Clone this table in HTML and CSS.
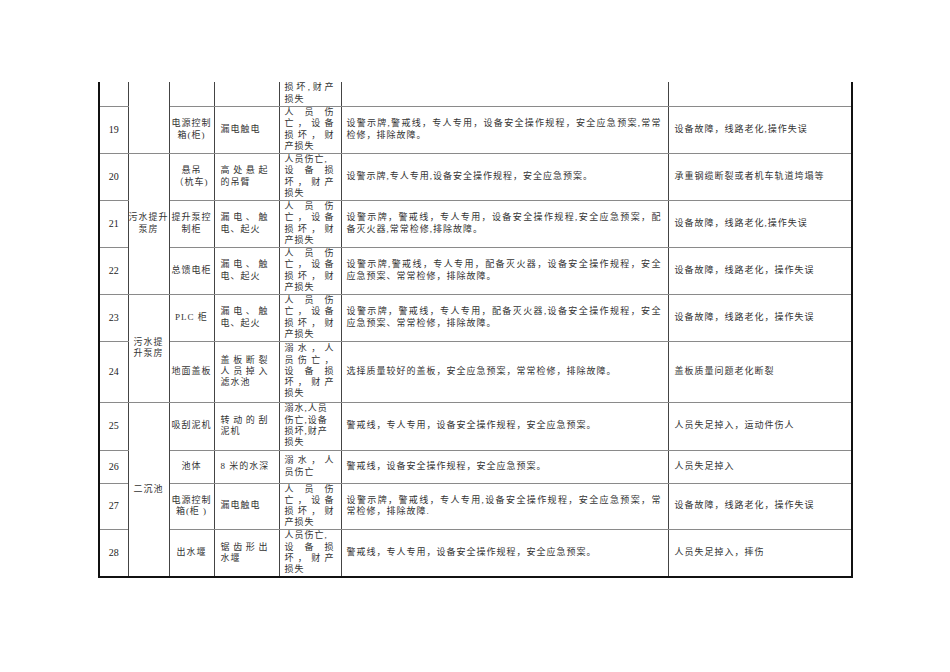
FILE: index.html
```html
<!DOCTYPE html>
<html lang="zh-CN">
<head>
<meta charset="utf-8">
<title>危险源辨识表</title>
<link rel="stylesheet" href="styles.css">
</head>
<body>
<div class="page">
<table class="sheet">
<colgroup>
<col class="c-num"><col class="c-grp"><col class="c-eq"><col class="c-hz"><col class="c-cq"><col class="c-ms"><col class="c-cs">
</colgroup>
<tbody>
<tr class="r24">
<td class="num"></td>
<td class="grp" rowspan="2"></td>
<td class="eq"></td>
<td class="hz"></td>
<td class="cq"><span class="l j">损坏,财产</span><span class="l">损失</span></td>
<td class="ms"></td>
<td class="cs"></td>
</tr>
<tr class="r47">
<td class="num">19</td>
<td class="eq"><span class="l">电源控制</span><span class="l">箱(柜)</span></td>
<td class="hz">漏电触电</td>
<td class="cq"><span class="l j">人员伤</span><span class="l j">亡，设备</span><span class="l j">损坏，财</span><span class="l">产损失</span></td>
<td class="ms"><span class="l j">设警示牌,警戒线，专人专用，设备安全操作规程，安全应急预案,常常</span><span class="l">检修，排除故障。</span></td>
<td class="cs">设备故障，线路老化,操作失误</td>
</tr>
<tr class="r47">
<td class="num">20</td>
<td class="grp" rowspan="3"><span class="l">污水提升</span><span class="l">泵房</span></td>
<td class="eq"><span class="l">悬吊</span><span class="l">（杭车)</span></td>
<td class="hz"><span class="l j">高处悬起</span><span class="l">的吊臂</span></td>
<td class="cq"><span class="l">人员伤亡,</span><span class="l j">设备损</span><span class="l j">坏，财产</span><span class="l">损失</span></td>
<td class="ms">设警示牌,专人专用,设备安全操作规程，安全应急预案。</td>
<td class="cs">承重钢缆断裂或者机车轨道垮塌等</td>
</tr>
<tr class="r47">
<td class="num">21</td>
<td class="eq"><span class="l">提升泵控</span><span class="l">制柜</span></td>
<td class="hz"><span class="l j">漏电、触</span><span class="l">电、起火</span></td>
<td class="cq"><span class="l j">人员伤</span><span class="l j">亡，设备</span><span class="l j">损坏，财</span><span class="l">产损失</span></td>
<td class="ms"><span class="l j">设警示牌，警戒线，专人专用，设备安全操作规程,安全应急预案，配</span><span class="l">备灭火器,常常检修,排除故障。</span></td>
<td class="cs">设备故障，线路老化,操作失误</td>
</tr>
<tr class="r47">
<td class="num">22</td>
<td class="eq">总馈电柜</td>
<td class="hz"><span class="l j">漏电、触</span><span class="l">电、起火</span></td>
<td class="cq"><span class="l j">人员伤</span><span class="l j">亡，设备</span><span class="l j">损坏，财</span><span class="l">产损失</span></td>
<td class="ms"><span class="l j">设警示牌,警戒线，专人专用，配备灭火器，设备安全操作规程，安全</span><span class="l">应急预案、常常检修，排除故障。</span></td>
<td class="cs">设备故障，线路老化，操作失误</td>
</tr>
<tr class="r47">
<td class="num">23</td>
<td class="grp" rowspan="2"><span class="l">污水提</span><span class="l">升泵房</span></td>
<td class="eq">PLC 柜</td>
<td class="hz"><span class="l j">漏电、触</span><span class="l">电、起火</span></td>
<td class="cq"><span class="l j">人员伤</span><span class="l j">亡，设备</span><span class="l j">损坏，财</span><span class="l">产损失</span></td>
<td class="ms"><span class="l j">设警示牌，警戒线，专人专用，配备灭火器,设备安全操作规程，安全</span><span class="l">应急预案、常常检修，排除故障。</span></td>
<td class="cs">设备故障，线路老化，操作失误</td>
</tr>
<tr class="r61">
<td class="num">24</td>
<td class="eq">地面盖板</td>
<td class="hz"><span class="l j">盖板断裂</span><span class="l j">人员掉入</span><span class="l">滤水池</span></td>
<td class="cq"><span class="l j">溺水，人</span><span class="l j">员伤亡，</span><span class="l j">设备损</span><span class="l j">坏，财产</span><span class="l">损失</span></td>
<td class="ms">选择质量较好的盖板，安全应急预案，常常检修，排除故障。</td>
<td class="cs">盖板质量问题老化断裂</td>
</tr>
<tr class="r48">
<td class="num">25</td>
<td class="grp" rowspan="4">二沉池</td>
<td class="eq">吸刮泥机</td>
<td class="hz"><span class="l j">转动的刮</span><span class="l">泥机</span></td>
<td class="cq"><span class="l">溺水,人员</span><span class="l">伤亡,设备</span><span class="l">损坏,财产</span><span class="l">损失</span></td>
<td class="ms">警戒线，专人专用，设备安全操作规程，安全应急预案。</td>
<td class="cs">人员失足掉入，运动件伤人</td>
</tr>
<tr class="r33">
<td class="num">26</td>
<td class="eq">池体</td>
<td class="hz">8 米的水深</td>
<td class="cq"><span class="l j">溺水，人</span><span class="l">员伤亡</span></td>
<td class="ms">警戒线，设备安全操作规程，安全应急预案。</td>
<td class="cs">人员失足掉入</td>
</tr>
<tr class="r46">
<td class="num">27</td>
<td class="eq"><span class="l">电源控制</span><span class="l">箱(柜 )</span></td>
<td class="hz">漏电触电</td>
<td class="cq"><span class="l j">人员伤</span><span class="l j">亡，设备</span><span class="l j">损坏，财</span><span class="l">产损失</span></td>
<td class="ms"><span class="l j">设警示牌，警戒线，专人专用,设备安全操作规程，安全应急预案，常</span><span class="l">常检修，排除故障.</span></td>
<td class="cs">设备故障，线路老化，操作失误</td>
</tr>
<tr class="r48">
<td class="num">28</td>
<td class="eq">出水堰</td>
<td class="hz"><span class="l j">锯齿形出</span><span class="l">水堰</span></td>
<td class="cq"><span class="l">人员伤亡,</span><span class="l j">设备损</span><span class="l j">坏，财产</span><span class="l">损失</span></td>
<td class="ms">警戒线，专人专用，设备安全操作规程，安全应急预案。</td>
<td class="cs">人员失足掉入，摔伤</td>
</tr>
</tbody>
</table>
</div>
</body>
</html>
```
FILE: styles.css
```css
html, body {
  margin: 0;
  padding: 0;
  background: #ffffff;
}
body {
  font-family: "Liberation Serif", "Noto Sans CJK SC", serif;
  color: #333333;
}
.page {
  padding: 82px 0 0 98px;
}
.sheet {
  border-collapse: collapse;
  table-layout: fixed;
  width: 753px;
  border-left: 2px solid #111111;
  border-right: 2px solid #111111;
  border-bottom: 2px solid #111111;
  font-size: 9px;
  letter-spacing: 1px;
  line-height: 11.3px;
}
.c-num { width: 29px; }
.c-grp { width: 41px; }
.c-eq { width: 45px; }
.c-hz { width: 65px; }
.c-cq { width: 62px; }
.c-ms { width: 327px; }
.c-cs { width: 184px; }
.sheet td {
  border-left: 1px solid #444444;
  border-right: 1px solid #444444;
  border-top: 1px solid #8a8a8a;
  border-bottom: 1px solid #8a8a8a;
  padding: 0;
  vertical-align: middle;
  overflow: hidden;
}
.sheet tr:first-child td {
  border-top: none;
}
.r24 { height: 24px; }
.r33 { height: 33px; }
.r46 { height: 46px; }
.r47 { height: 47px; }
.r48 { height: 48px; }
.r61 { height: 61px; }
.num {
  text-align: center;
  font-size: 10px;
  letter-spacing: 0;
  color: #222222;
}
.grp {
  text-align: center;
}
.eq {
  text-align: center;
  padding: 0 1px 0 2px;
}
.hz {
  padding: 0 10px 0 6px !important;
  white-space: nowrap;
}
.cq {
  padding: 0 6px 0 5px !important;
}
.ms {
  padding: 0 6px 0 5px !important;
  white-space: nowrap;
}
.cs {
  padding: 0 6px !important;
  white-space: nowrap;
}
.l {
  display: block;
  white-space: nowrap;
}
.j {
  text-align: justify;
  text-align-last: justify;
}
```
